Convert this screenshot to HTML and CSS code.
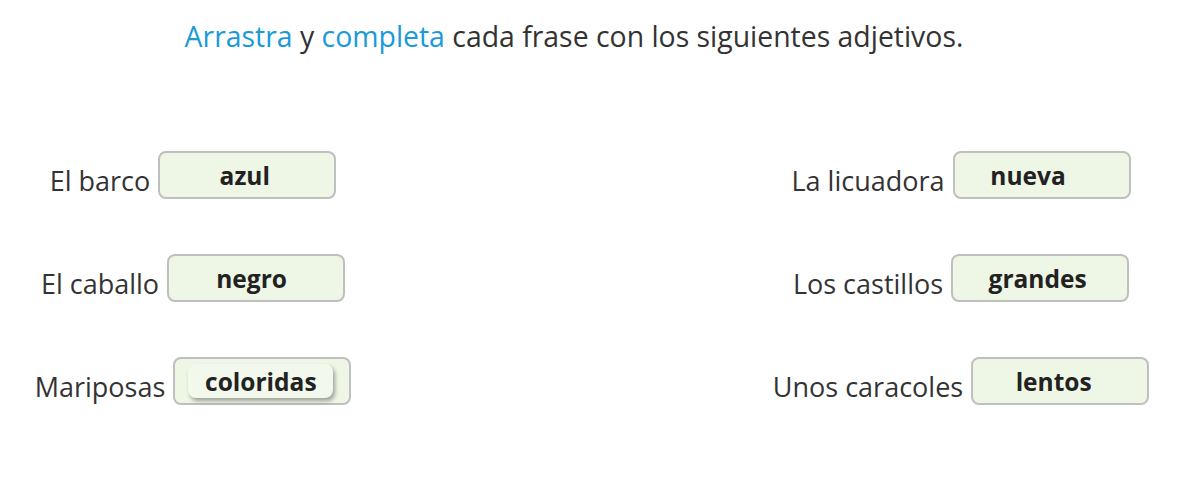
FILE: index.html
```html
<!DOCTYPE html>
<html lang="es">
<head>
<meta charset="utf-8">
<title>Adjetivos</title>
<link rel="stylesheet" href="styles.css">
</head>
<body>
<div class="page">
  <h1 class="title"><span class="hl">Arrastra</span> y <span class="hl">completa</span> cada frase con los siguientes adjetivos.</h1>
  <div class="board">
    <div class="col col-left">
      <div class="row"><span class="label">El barco</span><div class="slot"><span class="chip" style="--dx:12px">azul</span></div></div>
      <div class="row"><span class="label">El caballo</span><div class="slot"><span class="chip" style="--dx:10px">negro</span></div></div>
      <div class="row"><span class="label">Mariposas</span><div class="slot"><span class="chip chip-active" style="--dx:13px">coloridas</span></div></div>
    </div>
    <div class="col col-right">
      <div class="row"><span class="label">La licuadora</span><div class="slot"><span class="chip" style="--dx:1px">nueva</span></div></div>
      <div class="row"><span class="label">Los castillos</span><div class="slot"><span class="chip" style="--dx:12px">grandes</span></div></div>
      <div class="row"><span class="label">Unos caracoles</span><div class="slot"><span class="chip" style="--dx:8px">lentos</span></div></div>
    </div>
  </div>
</div>
</body>
</html>
```
FILE: styles.css
```css
html, body {
  margin: 0;
  padding: 0;
  background: #ffffff;
}
body {
  font-family: "Open Sans", "Noto Sans", sans-serif;
  color: #333333;
}
.page {
  width: 1183px;
  height: 497px;
}
.title {
  margin: 0;
  padding: 16px 0 0 0;
  width: 1148px;
  text-align: center;
  font-size: 28.4px;
  font-weight: 400;
  line-height: 40px;
  color: #333333;
}
.hl {
  color: #1b9ad8;
}
.board {
  display: grid;
  grid-template-columns: 386px 1fr 384px;
  width: 1153px;
  margin-top: 95px;
}
.col-left { grid-column: 1; }
.col-right { grid-column: 3; }
.col {
  display: flex;
  flex-direction: column;
  gap: 55px;
}
.row {
  display: flex;
  justify-content: center;
  align-items: center;
  gap: 8px;
  height: 48px;
}
.label {
  font-size: 27px;
  color: #333333;
  padding-top: 10px;
}
.slot {
  box-sizing: border-box;
  width: 178px;
  height: 48px;
  border: 2px solid #bfbfbf;
  border-radius: 8px;
  background: #eef6e5;
  display: flex;
  align-items: center;
}
.chip {
  box-sizing: border-box;
  width: 145px;
  height: 34px;
  margin-left: var(--dx, 0);
  display: flex;
  align-items: center;
  justify-content: center;
  font-size: 24.5px;
  font-weight: 700;
  color: #222222;
  border-radius: 8px;
}
.chip-active {
  background: #f2f8ec;
  box-shadow: 2px 3px 4px rgba(0, 0, 0, 0.35);
}
```
